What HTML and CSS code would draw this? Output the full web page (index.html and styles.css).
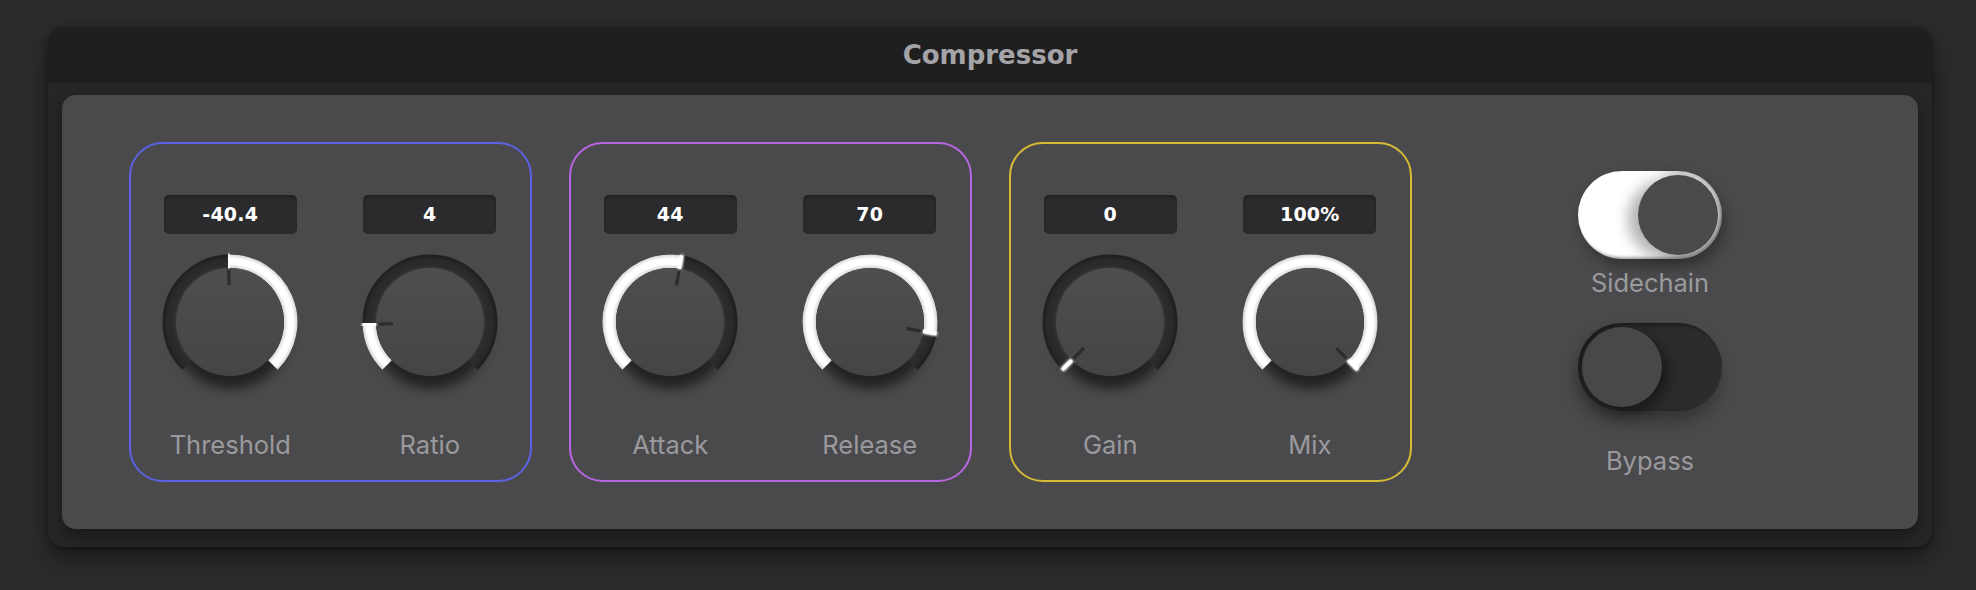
FILE: index.html
```html
<!DOCTYPE html>
<html>
<head>
<meta charset="utf-8">
<link rel="stylesheet" href="styles.css">
</head>
<body>
<div class="plugin">
  <div class="titlebar">Compressor</div>
  <div class="body">
    <div class="panel">
      <div class="group blue">
        <div class="ctrl">
          <div class="value">-40.4</div>
          <svg class="knob" viewBox="0 0 150 150" width="150" height="150">
            <defs>
              <filter id="blur" x="-30%" y="-30%" width="160%" height="160%"><feGaussianBlur stdDeviation="6"/></filter>
              <filter id="glow" x="-100%" y="-100%" width="300%" height="300%"><feGaussianBlur stdDeviation="1.6" result="b"/><feMerge><feMergeNode in="b"/><feMergeNode in="b"/><feMergeNode in="SourceGraphic"/></feMerge></filter>
              <radialGradient id="trk" gradientUnits="userSpaceOnUse" cx="75" cy="75" r="67.5">
                <stop offset="0.79" stop-color="#38383a"/>
                <stop offset="0.84" stop-color="#2c2c2e"/>
                <stop offset="0.93" stop-color="#29292b"/>
                <stop offset="1" stop-color="#1e1e20"/>
              </radialGradient>
              <radialGradient id="fil" gradientUnits="userSpaceOnUse" cx="75" cy="75" r="67.5">
                <stop offset="0.79" stop-color="#d0d0d0"/>
                <stop offset="0.86" stop-color="#ffffff"/>
                <stop offset="0.94" stop-color="#ffffff"/>
                <stop offset="1" stop-color="#d4d4d4"/>
              </radialGradient>
              <linearGradient id="kb" x1="0" y1="0" x2="0" y2="1">
                <stop offset="0" stop-color="#4e4e50"/>
                <stop offset="1" stop-color="#454547"/>
              </linearGradient>
            </defs>
            <circle class="shadow" cx="76" cy="84" r="58"/>
            <path class="track" d="M 32.04 117.96 A 60.75 60.75 0 1 1 117.96 117.96"/>
            <path class="fill" d="M 73.52 14.27 A 60.75 60.75 0 0 1 117.96 117.96"/>
            <circle class="body-c" cx="75" cy="75" r="54"/>
            <line class="ptr" x1="74.10" y1="38.01" x2="73.68" y2="21.02"/>
            <line class="mark" x1="73.68" y1="21.02" x2="73.35" y2="7.52"/>
          </svg>
          <div class="label">Threshold</div>
        </div>
        <div class="ctrl">
          <div class="value">4</div>
          <svg class="knob" viewBox="0 0 150 150" width="150" height="150">
            <circle class="shadow" cx="76" cy="84" r="58"/>
            <path class="track" d="M 32.04 117.96 A 60.75 60.75 0 1 1 117.96 117.96"/>
            <path class="fill" d="M 32.04 117.96 A 60.75 60.75 0 0 1 14.30 77.54"/>
            <circle class="body-c" cx="75" cy="75" r="54"/>
            <line class="ptr" x1="38.03" y1="76.55" x2="21.05" y2="77.26"/>
            <line class="mark" x1="21.05" y1="77.26" x2="7.56" y2="77.83"/>
          </svg>
          <div class="label">Ratio</div>
        </div>
      </div>
      <div class="group purple">
        <div class="ctrl">
          <div class="value">44</div>
          <svg class="knob" viewBox="0 0 150 150" width="150" height="150">
            <circle class="shadow" cx="76" cy="84" r="58"/>
            <path class="track" d="M 32.04 117.96 A 60.75 60.75 0 1 1 117.96 117.96"/>
            <path class="fill" d="M 32.04 117.96 A 60.75 60.75 0 0 1 85.55 15.17"/>
            <circle class="body-c" cx="75" cy="75" r="54"/>
            <line class="ptr" x1="81.43" y1="38.56" x2="84.38" y2="21.82"/>
            <line class="mark" x1="84.38" y1="21.82" x2="86.72" y2="8.53"/>
          </svg>
          <div class="label">Attack</div>
        </div>
        <div class="ctrl">
          <div class="value">70</div>
          <svg class="knob" viewBox="0 0 150 150" width="150" height="150">
            <circle class="shadow" cx="76" cy="84" r="58"/>
            <path class="track" d="M 32.04 117.96 A 60.75 60.75 0 1 1 117.96 117.96"/>
            <path class="fill" d="M 32.04 117.96 A 60.75 60.75 0 1 1 134.83 85.55"/>
            <circle class="body-c" cx="75" cy="75" r="54"/>
            <line class="ptr" x1="111.44" y1="81.43" x2="128.18" y2="84.38"/>
            <line class="mark" x1="128.18" y1="84.38" x2="141.47" y2="86.72"/>
          </svg>
          <div class="label">Release</div>
        </div>
      </div>
      <div class="group yellow">
        <div class="ctrl">
          <div class="value">0</div>
          <svg class="knob" viewBox="0 0 150 150" width="150" height="150">
            <circle class="shadow" cx="76" cy="84" r="58"/>
            <path class="track" d="M 32.04 117.96 A 60.75 60.75 0 1 1 117.96 117.96"/>
            <circle class="body-c" cx="75" cy="75" r="54"/>
            <line class="ptr" x1="48.84" y1="101.16" x2="36.82" y2="113.18"/>
            <line class="mark" x1="36.82" y1="113.18" x2="27.27" y2="122.73"/>
          </svg>
          <div class="label">Gain</div>
        </div>
        <div class="ctrl">
          <div class="value">100%</div>
          <svg class="knob" viewBox="0 0 150 150" width="150" height="150">
            <circle class="shadow" cx="76" cy="84" r="58"/>
            <path class="track" d="M 32.04 117.96 A 60.75 60.75 0 1 1 117.96 117.96"/>
            <path class="fill" d="M 32.04 117.96 A 60.75 60.75 0 1 1 117.96 117.96"/>
            <circle class="body-c" cx="75" cy="75" r="54"/>
            <line class="ptr" x1="101.16" y1="101.16" x2="113.18" y2="113.18"/>
            <line class="mark" x1="113.18" y1="113.18" x2="122.73" y2="122.73"/>
          </svg>
          <div class="label">Mix</div>
        </div>
      </div>
      <div class="switches">
        <div class="toggle on"><div class="thumb"></div></div>
        <div class="label sw-label1">Sidechain</div>
        <div class="toggle off"><div class="thumb"></div></div>
        <div class="label sw-label2">Bypass</div>
      </div>
    </div>
  </div>
</div>
</body>
</html>
```

FILE: styles.css
```css
html, body {
  margin: 0;
  padding: 0;
}
body {
  background: #2c2c2e;
  width: 1976px;
  height: 590px;
  overflow: hidden;
}
.plugin {
  width: 1884px;
  margin: 27px 0 0 48px;
  background: #262626;
  border-radius: 16px;
  box-shadow: 0 12px 28px rgba(0, 0, 0, 0.45), 0 2px 6px rgba(0, 0, 0, 0.3);
  overflow: hidden;
}
.titlebar {
  height: 56px;
  background: #1f1f1f;
  color: #a4a4a8;
  font-family: "DejaVu Sans", sans-serif;
  font-weight: bold;
  font-size: 26px;
  line-height: 56px;
  text-align: center;
}
.body {
  padding: 12px 14px 18px;
}
.panel {
  height: 434px;
  background: #4a4a4c;
  border-radius: 14px;
  box-shadow: 0 8px 14px rgba(0, 0, 0, 0.35);
  display: flex;
  justify-content: center;
  align-items: center;
  gap: 37px;
}
.group {
  box-sizing: border-box;
  width: 403px;
  height: 340px;
  border: 2px solid;
  border-radius: 34px;
  display: flex;
}
.blue { border-color: #5d62e4; }
.purple { border-color: #b866e2; }
.yellow { border-color: #d8bb34; }
.ctrl {
  flex: 1;
  display: flex;
  flex-direction: column;
  align-items: center;
  padding-top: 50.6px;
}
.value {
  width: 133px;
  height: 39px;
  border-radius: 5px;
  background: #2b2b2d;
  box-shadow: inset 0 2px 3px rgba(0, 0, 0, 0.25);
  color: #ffffff;
  font-family: "DejaVu Sans", sans-serif;
  font-weight: bold;
  font-size: 19px;
  letter-spacing: 0.2px;
  line-height: 39px;
  text-align: center;
}
.knob {
  display: block;
  margin-top: 13.4px;
  overflow: visible;
}
.knob .shadow {
  fill: rgba(0, 0, 0, 0.55);
  filter: url(#blur);
}
.knob .track {
  fill: none;
  stroke: url(#trk);
  stroke-width: 13.5;
}
.knob .fill {
  fill: none;
  stroke: url(#fil);
  stroke-width: 13.5;
}
.knob .body-c {
  fill: url(#kb);
}
.knob .ptr {
  stroke: #2c2c2e;
  stroke-width: 3.2;
}
.knob .mark {
  stroke: #ffffff;
  stroke-width: 3.4;
  filter: url(#glow);
}
.label {
  margin-top: 33.3px;
  height: 30px;
  line-height: 30px;
  color: #9a9a9e;
  font-family: Inter, "Liberation Sans", sans-serif;
  font-size: 25.5px;
  text-align: center;
}
.switches {
  box-sizing: border-box;
  width: 403px;
  height: 340px;
  display: flex;
  flex-direction: column;
  align-items: center;
  padding-top: 29.3px;
}
.toggle {
  box-sizing: border-box;
  width: 144px;
  height: 88px;
  border-radius: 44px;
  padding: 4px;
  display: flex;
}
.toggle .thumb {
  width: 80px;
  height: 80px;
  border-radius: 50%;
  background: #4a4a4c;
}
.toggle.on {
  background: linear-gradient(90deg, #ffffff 0%, #ffffff 55%, #d0d0d0 72%, #c8c8c8 100%);
  justify-content: flex-end;
  box-shadow: inset -2px -2px 3px rgba(0, 0, 0, 0.35), 4px 8px 14px rgba(0, 0, 0, 0.3);
}
.toggle.on .thumb {
  box-shadow: -10px 4px 14px rgba(0, 0, 0, 0.3);
}
.toggle.off {
  background: #2c2c2e;
  justify-content: flex-start;
  box-shadow: inset 3px 2px 5px rgba(0, 0, 0, 0.45), -2px 10px 16px rgba(0, 0, 0, 0.3);
}
.toggle.off .thumb {
  background: #48484a;
  box-shadow: 6px 6px 14px rgba(0, 0, 0, 0.45);
}
.sw-label1 {
  margin-top: 9px;
}
.sw-label2 {
  margin-top: 35px;
}
.switches .toggle.off {
  margin-top: 24.7px;
}
```
